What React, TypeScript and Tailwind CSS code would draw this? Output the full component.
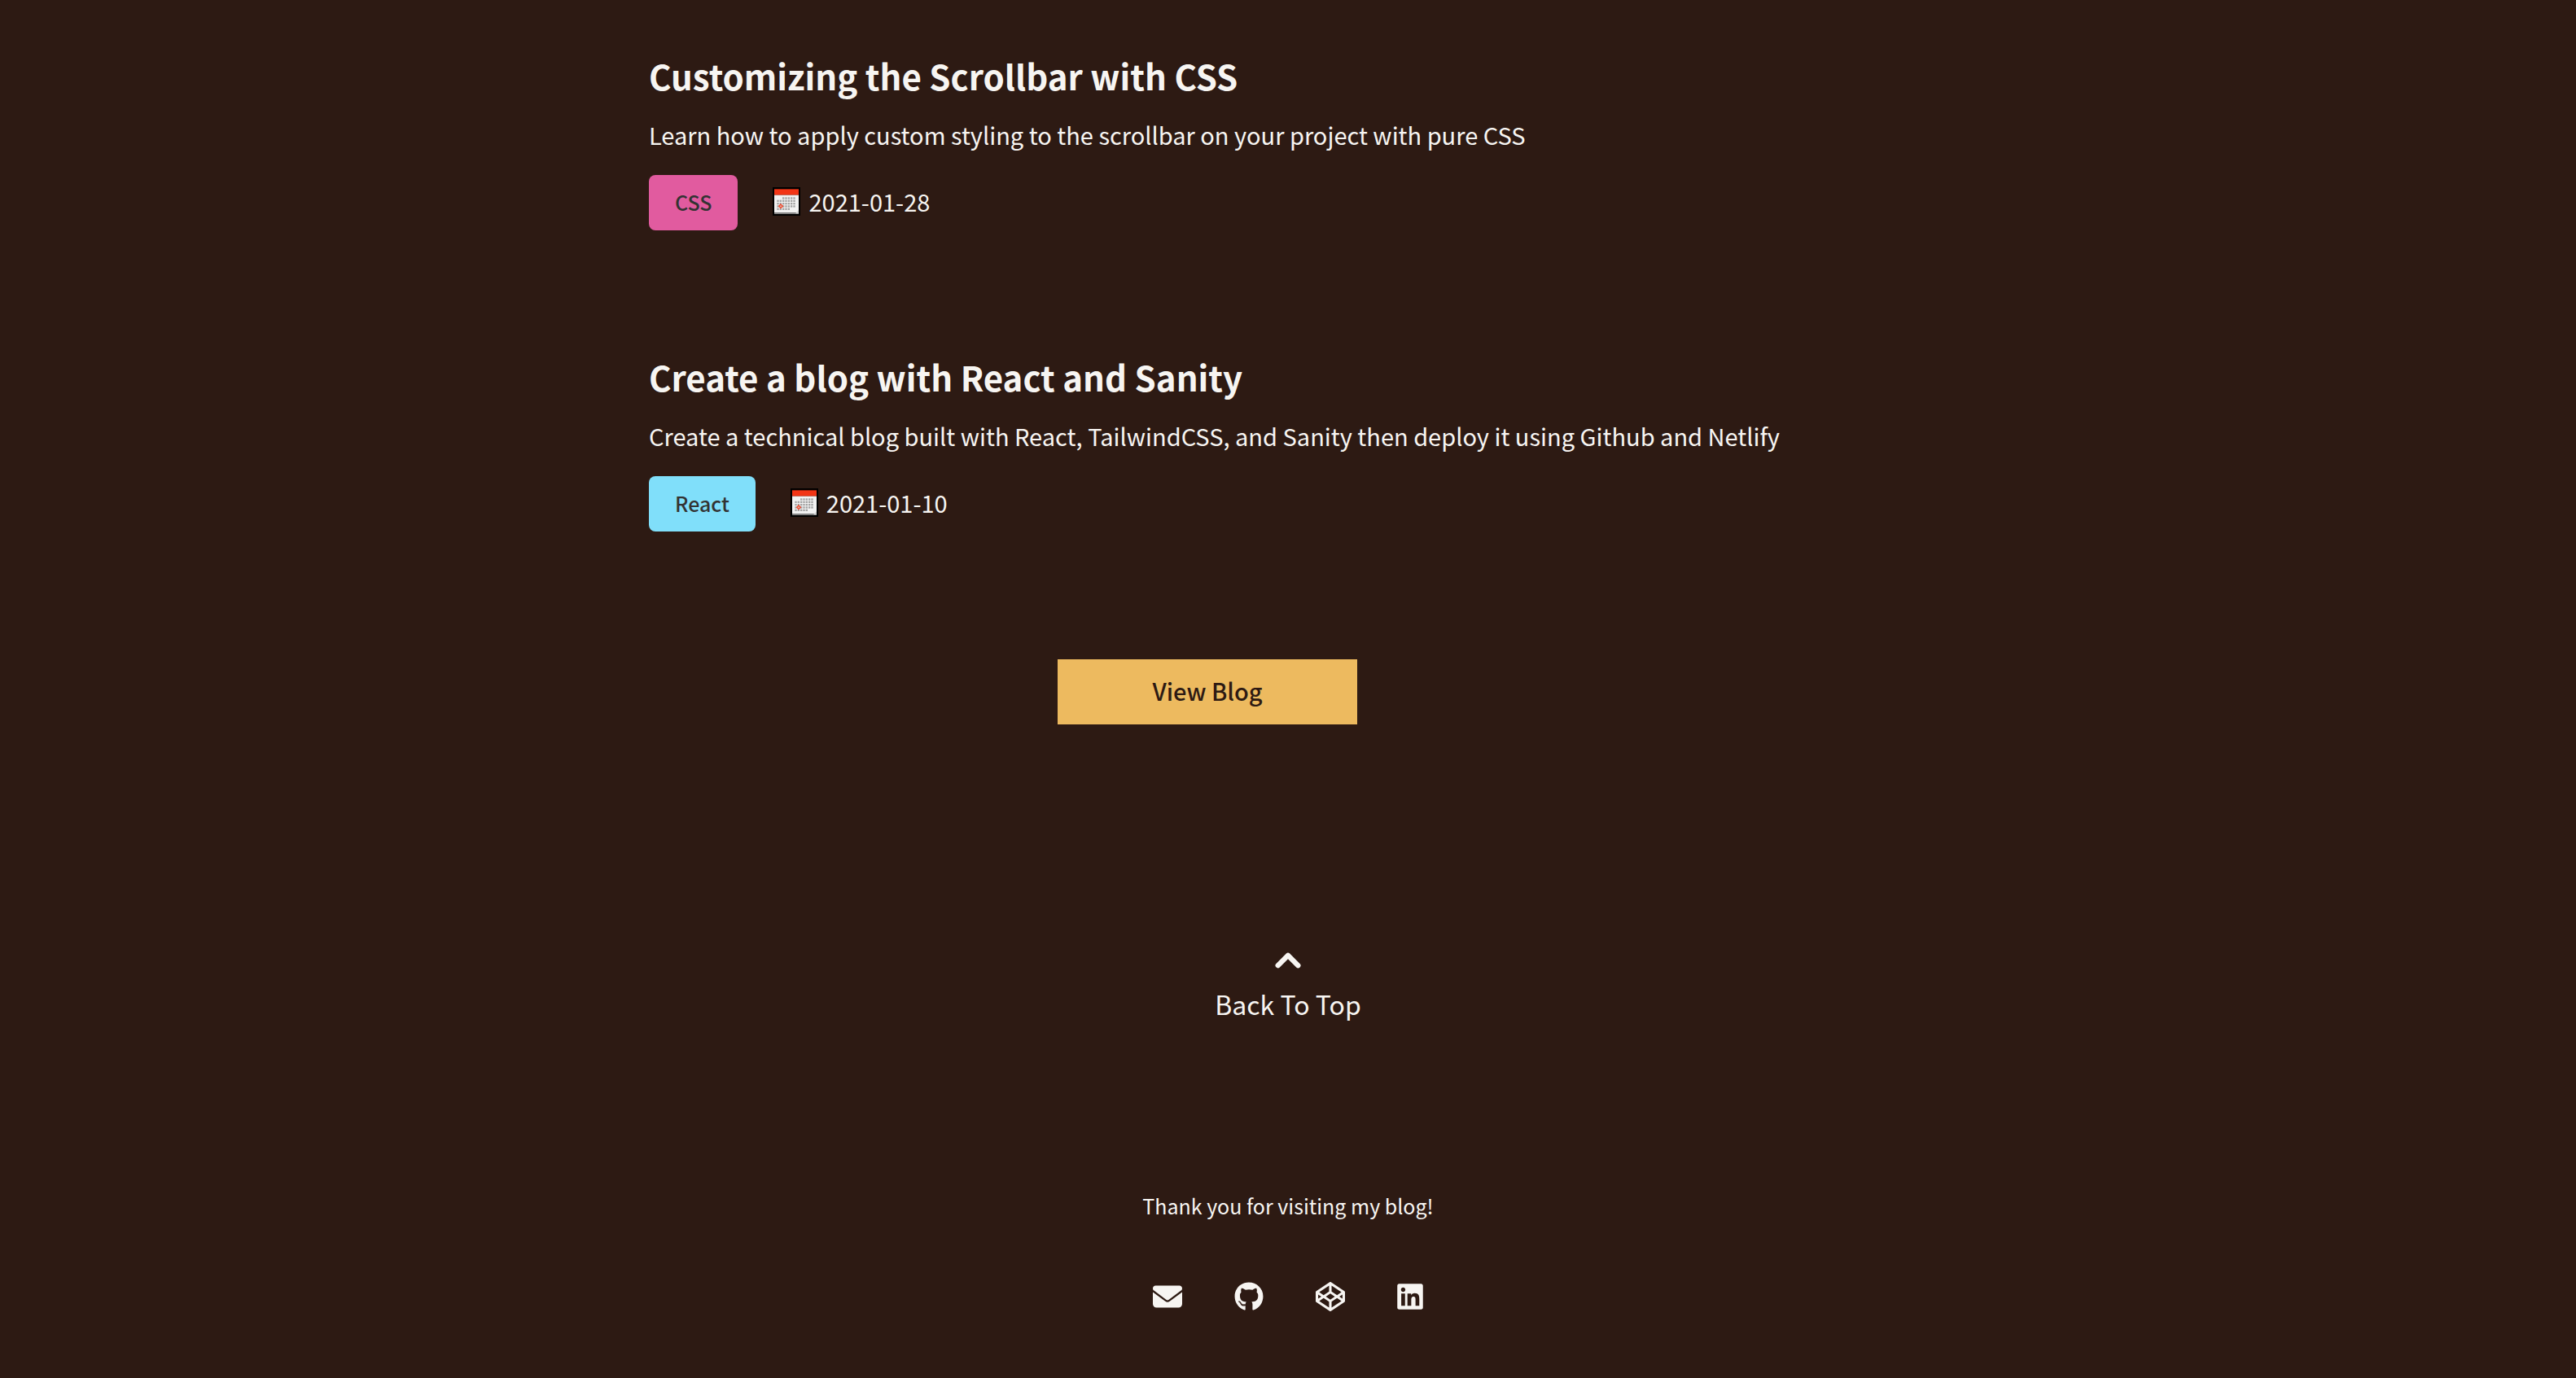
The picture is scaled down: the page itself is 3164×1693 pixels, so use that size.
import { HiChevronUp } from "react-icons/hi";
import { FaCodepen, FaEnvelope, FaGithub, FaLinkedin } from "react-icons/fa6";

type Post = {
  title: string;
  summary: string;
  tag: string;
  tagColor: string;
  date: string;
};

const posts: Post[] = [
  {
    title: "Customizing the Scrollbar with CSS",
    summary: "Learn how to apply custom styling to the scrollbar on your project with pure CSS",
    tag: "CSS",
    tagColor: "bg-[#e15b9f]",
    date: "2021-01-28",
  },
  {
    title: "Create a blog with React and Sanity",
    summary:
      "Create a technical blog built with React, TailwindCSS, and Sanity then deploy it using Github and Netlify",
    tag: "React",
    tagColor: "bg-[#80dffa]",
    date: "2021-01-10",
  },
];

const links = [
  { label: "Email", icon: FaEnvelope, box: "w-9" },
  { label: "GitHub", icon: FaGithub, box: "w-9" },
  { label: "CodePen", icon: FaCodepen, box: "w-9" },
  { label: "LinkedIn", icon: FaLinkedin, box: "w-8" },
];

// Day cells: the first week starts on its third day, the last one ends on its fifth.
const days = Array.from({ length: 35 }, (_, i) => i).filter((i) => i > 1 && i < 33);

function CalendarIcon() {
  return (
    <svg viewBox="0 0 102 105" className="h-[35px] w-[34px] shrink-0" aria-hidden="true">
      <rect width="102" height="105" fill="#000" />
      <rect x="6" y="7" width="90" height="22" fill="#f23516" />
      <rect x="6" y="29" width="90" height="65" fill="#f2f2f2" />
      <rect x="6" y="94" width="90" height="5" fill="#8d8d8d" />
      {days.map((i) => (
        <rect
          key={i}
          x={16 + (i % 7) * 10}
          y={37 + Math.floor(i / 7) * 10}
          width="7"
          height="7"
          fill="#a3a3a3"
        />
      ))}
      <path d="M84 97 96 85V97Z" fill="#d2d2d2" />
      <path d="M30 63 37 70 30 77 23 70Z" fill="#d9b0a6" stroke="#f0492d" strokeWidth="4" />
    </svg>
  );
}

function PostItem({ post }: { post: Post }) {
  return (
    <article>
      <h2 className="text-[42px] leading-[60px] font-bold">{post.title}</h2>
      <p className="mt-5 text-[29px] leading-[44px] xl:whitespace-nowrap">{post.summary}</p>
      <div className="mt-7 flex items-center gap-[43px]">
        <a
          href="#tag"
          className={`flex h-[68px] items-center rounded-lg px-8 text-[25px] font-medium text-[#333333] ${post.tagColor}`}
        >
          {post.tag}
        </a>
        <div className="flex items-center gap-[10px] pb-1 text-[29px] leading-[44px]">
          <CalendarIcon />
          <time dateTime={post.date}>{post.date}</time>
        </div>
      </div>
    </article>
  );
}

export default function App() {
  return (
    <div
      id="top"
      className="min-h-screen bg-[#2d1a13] pb-[82px] font-['Noto_Sans_CJK_SC','Noto_Sans',sans-serif] text-[#f7f5f2]"
    >
      <main className="mx-auto max-w-[1570px] pt-[63px]">
        <section className="flex max-w-[1372px] flex-col">
          <div className="flex flex-col gap-[150px]">
            {posts.map((post) => (
              <PostItem key={post.title} post={post} />
            ))}
          </div>
          <button
            type="button"
            className="mt-[157px] h-20 w-[368px] cursor-pointer self-center bg-[#edba5f] pb-1 text-[29px] leading-[44px] font-medium text-[#2d1a13]"
          >
            View Blog
          </button>
        </section>
      </main>
      <footer className="flex flex-col items-center">
        <a href="#top" className="mt-[259px] flex flex-col items-center">
          <HiChevronUp className="size-[62px]" />
          <span className="text-[32px] leading-[44px]">Back To Top</span>
        </a>
        <p className="mt-[208px] text-[25px] leading-9">Thank you for visiting my blog!</p>
        <nav aria-label="Social links" className="mt-[76px] flex gap-16">
          {links.map(({ label, icon: Icon, box }) => (
            <a key={label} href="#top" aria-label={label} className={`flex justify-center ${box}`}>
              <Icon className="size-9 shrink-0" />
            </a>
          ))}
        </nav>
      </footer>
    </div>
  );
}
